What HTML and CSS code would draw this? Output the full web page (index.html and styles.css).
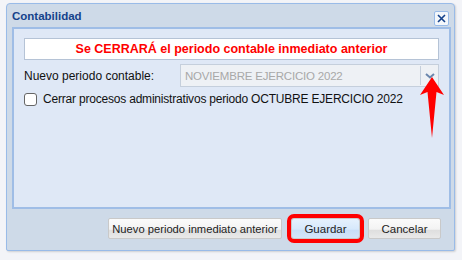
FILE: index.html
```html
<!DOCTYPE html>
<html lang="es">
<head>
    <meta charset="UTF-8">
    <title>Contabilidad</title>
    <link rel="stylesheet" href="styles.css">
</head>
<body>
    <div class="window">
        <div class="window-header">
            <span class="window-title">Contabilidad</span>
            <span class="close-tool">
                <svg width="11" height="11" viewBox="0 0 11 11">
                    <path d="M2 2 L9 9 M9 2 L2 9" stroke="#15428b" stroke-width="1.6" fill="none"/>
                </svg>
            </span>
        </div>
        <div class="panel">
            <div class="alert">Se CERRAR&Aacute; el periodo contable inmediato anterior</div>
            <div class="field-row">
                <label class="field-label">Nuevo periodo contable:</label>
                <div class="combo">
                    <span class="combo-text">NOVIEMBRE EJERCICIO 2022</span>
                    <span class="combo-trigger">
                        <svg width="10" height="6" viewBox="0 0 10 6">
                            <path d="M1 1 L5 4.5 L9 1" stroke="#6a86ad" stroke-width="2" fill="none"/>
                        </svg>
                    </span>
                </div>
            </div>
            <div class="check-row">
                <span class="checkbox"></span>
                <span class="check-label">Cerrar procesos administrativos periodo OCTUBRE EJERCICIO 2022</span>
            </div>
        </div>
        <div class="toolbar">
            <button class="btn btn-wide">Nuevo periodo inmediato anterior</button>
            <button class="btn btn-save">Guardar</button>
            <button class="btn">Cancelar</button>
        </div>
    </div>

    <!-- flecha de anotacion -->
    <svg class="pointer" width="30" height="64" viewBox="0 0 30 64">
        <path d="M15 0 L27 18 L19.5 15 L15 61 L10.5 15 L3 18 Z" fill="#f00"/>
    </svg>
</body>
</html>
```

FILE: styles.css
```css
body {
    margin: 0;
    background-color: #f3f4f8;
    font-family: "Liberation Sans", Arial, sans-serif;
    position: relative;
    height: 260px;
}
.window {
    margin: 3px 0 0 6px;
    width: 447px;
    height: 246px;
    border: 1px solid #99bbe8;
    border-radius: 4px 4px 2px 2px;
    background-color: #cedae8;
    display: flex;
    flex-direction: column;
    box-shadow: 1px 1px 2px rgba(0, 0, 0, 0.15);
}
.window-header {
    height: 23px;
    display: flex;
    align-items: center;
    justify-content: space-between;
    padding: 0 5px 0 5px;
}
.window-title {
    font-weight: bold;
    font-size: 11.5px;
    color: #15428b;
    margin-top: 1px;
}
.close-tool {
    width: 13px;
    height: 13px;
    border: 1px solid #99bbe8;
    border-radius: 2px;
    background-color: #f4f7fb;
    display: flex;
    align-items: center;
    justify-content: center;
    margin-top: 5px;
}
.panel {
    margin: 0 3px 0 5px;
    height: 169px;
    border: 2px solid #9fbde6;
    background-color: #dfe8f6;
    padding: 9px 10px 0 10px;
}
.alert {
    height: 20px;
    border: 1px solid #b5c3d6;
    background-color: #fff;
    color: #f00;
    font-weight: bold;
    font-size: 12.5px;
    text-align: center;
    line-height: 20px;
}
.field-row {
    display: flex;
    align-items: center;
    margin-top: 4px;
    height: 23px;
}
.field-label {
    font-size: 12px;
    color: #111;
    width: 156px;
}
.combo {
    flex: 1;
    height: 21px;
    border: 1px solid #c5cfdc;
    background-color: #eef1f5;
    display: flex;
    align-items: center;
}
.combo-text {
    flex: 1;
    font-size: 11.5px;
    letter-spacing: -0.2px;
    color: #a8a8a8;
    padding-left: 4px;
}
.combo-trigger {
    width: 17px;
    height: 19px;
    border-left: 1px solid #c5cfdc;
    display: flex;
    align-items: center;
    justify-content: center;
}
.check-row {
    display: flex;
    align-items: center;
    margin-top: 5px;
}
.checkbox {
    width: 11px;
    height: 11px;
    border: 1px solid #666;
    border-radius: 3px;
    background-color: #fff;
    margin-right: 6px;
}
.check-label {
    font-size: 12px;
    letter-spacing: -0.2px;
    color: #111;
}
.toolbar {
    display: flex;
    justify-content: flex-end;
    padding: 9px 13px 0 0;
}
.btn {
    height: 21px;
    font-family: "Liberation Sans", Arial, sans-serif;
    font-size: 11.5px;
    color: #222;
    white-space: nowrap;
    border: 1px solid #c9c9c9;
    border-radius: 2px;
    background: linear-gradient(#fbfbfb 0%, #f3f3f3 55%, #dedede 56%, #e9e9e9 100%);
    padding: 0;
    margin-left: 8px;
    width: 73px;
}
.btn-wide {
    width: 174px;
    font-size: 11.2px;
}
.btn-save {
    width: 69px;
    margin-left: 9px;
    background: linear-gradient(#e6f1fd 0%, #d6e8fb 55%, #c7def8 56%, #d4e5f9 100%);
    outline: 4px solid #f00;
    outline-offset: 0;
    border-radius: 3px;
}
.pointer {
    position: absolute;
    left: 417px;
    top: 77px;
}
```
